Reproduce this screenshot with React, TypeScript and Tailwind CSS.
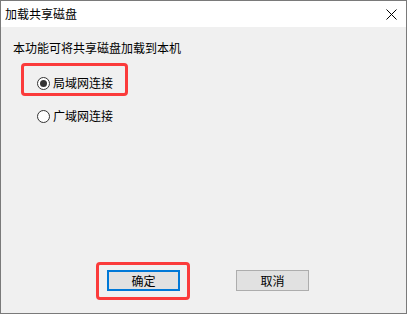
import React from "react";

const FONT = { fontFamily: '"Noto Sans CJK SC", "Noto Sans", sans-serif' };

function Radio({ checked, label }: { checked?: boolean; label: string }) {
  return (
    <div className="flex items-center gap-[3px] h-[16px]">
      <span className="w-[13px] h-[13px] rounded-full border border-[#333333] bg-white flex items-center justify-center">
        {checked && <span className="w-[7px] h-[7px] rounded-full bg-[#333333]" />}
      </span>
      <span className="text-[12px] leading-[16px] text-black">{label}</span>
    </div>
  );
}

export default function App() {
  return (
    <div className="w-[411px] h-[316px] bg-white" style={FONT}>
      <div className="relative w-[407px] h-[314px] border border-[#7a7a7a] flex flex-col">
        {/* Title bar */}
        <div className="h-[26px] bg-white flex items-center justify-between pl-[4px] pr-[8px]">
          <span className="text-[12px] leading-[16px] text-black">加载共享磁盘</span>
          <svg width="11" height="11" viewBox="0 0 11 11" className="mr-[1px]">
            <path d="M0.5 0.5 L10.5 10.5 M10.5 0.5 L0.5 10.5" stroke="#000" strokeWidth="1" />
          </svg>
        </div>

        {/* Body */}
        <div className="flex-1 bg-[#f0f0f0] flex flex-col pt-[13px] pl-[12px] pb-[22px]">
          <p className="text-[12px] leading-[16px] text-black">本功能可将共享磁盘加载到本机</p>
          <div className="ml-[24px] mt-[19px]">
            <Radio checked label="局域网连接" />
          </div>
          <div className="ml-[24px] mt-[17px]">
            <Radio label="广域网连接" />
          </div>

          <div className="mt-auto flex ml-[94px] gap-[56px]">
            <button className="w-[73px] h-[21px] border-2 border-[#0078d7] bg-[#e1e1e1] text-[12px] leading-[16px] text-black flex items-center justify-center">
              确定
            </button>
            <button className="w-[73px] h-[21px] border border-[#adadad] bg-[#e1e1e1] text-[12px] leading-[16px] text-black flex items-center justify-center">
              取消
            </button>
          </div>
        </div>

        {/* Red annotation boxes */}
        <div className="absolute left-[20px] top-[62px] w-[107px] h-[33px] border-[3px] border-[#fb3b3b] rounded-[4px]" />
        <div className="absolute left-[95px] top-[261px] w-[94px] h-[38px] border-[3px] border-[#fb3b3b] rounded-[4px]" />
      </div>
    </div>
  );
}
